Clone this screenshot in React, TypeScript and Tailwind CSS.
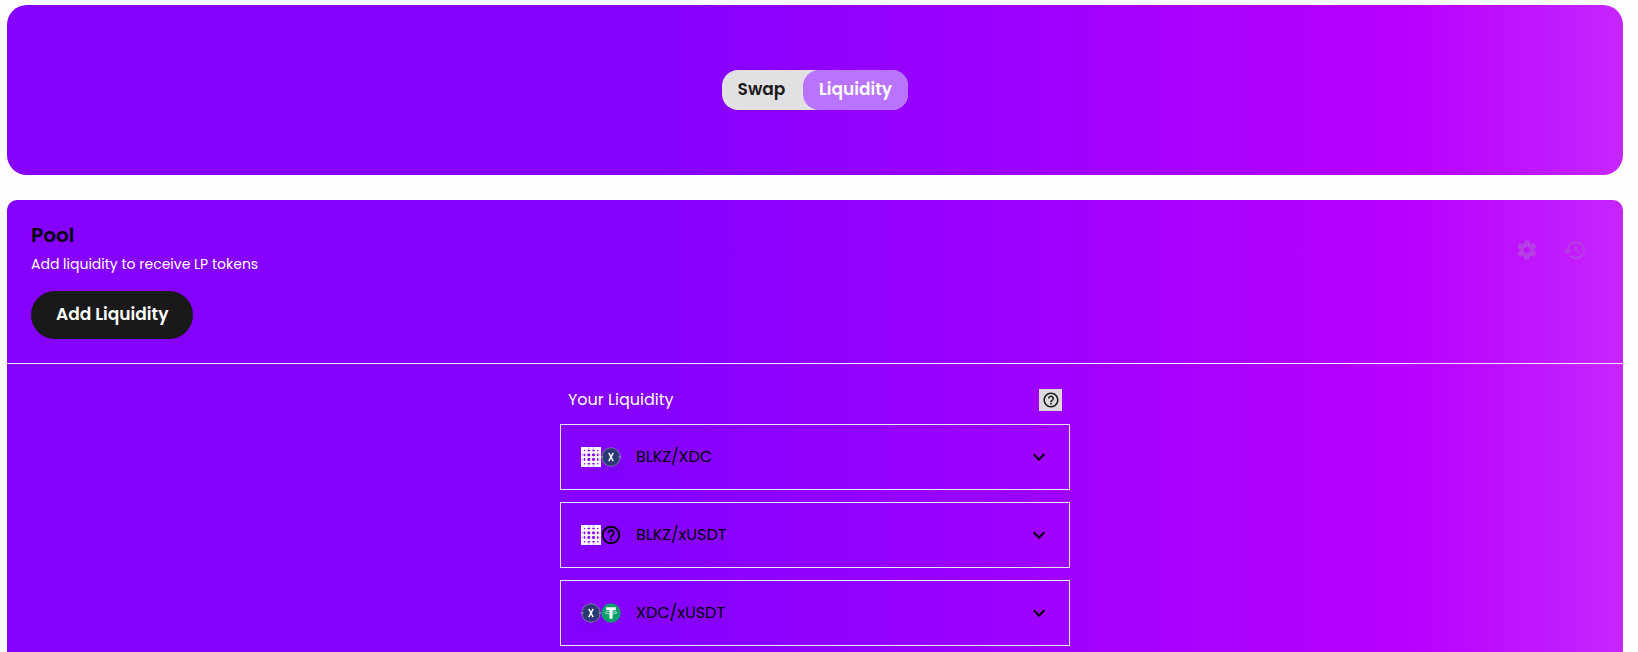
import type { ReactNode } from "react";

type Token = "BLKZ" | "XDC" | "xUSDT" | "unknown";

interface Pair {
  name: string;
  icons: [Token, Token];
}

const pairs: Pair[] = [
  { name: "BLKZ/XDC", icons: ["BLKZ", "XDC"] },
  { name: "BLKZ/xUSDT", icons: ["BLKZ", "unknown"] },
  { name: "XDC/xUSDT", icons: ["XDC", "xUSDT"] },
];

const GRADIENT =
  "bg-linear-to-r/srgb from-[#8500ff] from-40% via-[#b700ff] via-87% to-[#c626ff]";

function HelpIcon({ className }: { className?: string }) {
  return (
    <svg viewBox="0 0 24 24" fill="currentColor" className={className}>
      <path d="M11 18h2v-2h-2v2zm1-16C6.48 2 2 6.48 2 12s4.48 10 10 10 10-4.48 10-10S17.52 2 12 2zm0 18c-4.41 0-8-3.59-8-8s3.59-8 8-8 8 3.59 8 8-3.59 8-8 8zm0-14c-2.21 0-4 1.79-4 4h2c0-1.1.9-2 2-2s2 .9 2 2c0 2-3 1.75-3 5h2c0-2.25 3-2.5 3-5 0-2.21-1.79-4-4-4z" />
    </svg>
  );
}

function BlkzIcon() {
  const cells = [
    { at: 3.5, size: 1.6 },
    { at: 7.8, size: 2.8 },
    { at: 12.5, size: 2.8 },
    { at: 16.7, size: 1.6 },
  ];
  return (
    <svg viewBox="0 0 20 20" className="size-5">
      <rect width="20" height="20" fill="#fff" />
      {cells.map((row) =>
        cells.map((col) => (
          <rect
            key={`${col.at}-${row.at}`}
            x={col.at - col.size / 2}
            y={row.at - row.size / 2}
            width={col.size}
            height={row.size}
            rx="0.8"
            fill="#8a00ff"
          />
        ))
      )}
      <path
        d="M7.8 .6v1M12.5 .6v1M7.8 18.6v.8M12.5 18.6v.8M.6 7.8h1M.6 12.5h1M18.6 7.8h.8M18.6 12.5h.8"
        stroke="#8a00ff"
        strokeOpacity="0.6"
        strokeWidth="1.4"
      />
    </svg>
  );
}

function XdcIcon() {
  return (
    <svg
      viewBox="0 0 20 20"
      className="size-5 rounded-full shadow-[0_6px_10px_rgba(0,0,0,0.08)]"
    >
      <circle cx="10" cy="10" r="9.3" fill="#2b3977" stroke="#8f8aa6" strokeWidth="0.9" />
      <path d="M0.3 10h2M17.7 10h2" stroke="#b9b4cc" strokeWidth="1.2" />
      <path d="M7.8 5.9l4.4 8.2M12.2 5.9l-4.4 8.2" stroke="#fff" strokeWidth="1.4" />
    </svg>
  );
}

function TetherIcon() {
  return (
    <svg viewBox="0 0 20 20" className="size-5">
      <circle cx="10" cy="10" r="9.7" fill="#0c9f6c" />
      <path d="M5.2 4.3h9.6v3h-3.3v8.4H8.5V7.3H5.2z" fill="#fff" />
      <ellipse cx="10" cy="9.7" rx="5.8" ry="1.3" fill="none" stroke="#fff" strokeWidth="0.6" />
    </svg>
  );
}

function TokenIcon({ token }: { token: Token }) {
  if (token === "BLKZ") return <BlkzIcon />;
  if (token === "XDC") return <XdcIcon />;
  if (token === "xUSDT") return <TetherIcon />;
  return <HelpIcon className="size-5 scale-110" />;
}

function IconButton({ label, children }: { label: string; children: ReactNode }) {
  return (
    <button aria-label={label} className="flex size-12 items-center justify-center text-[#b53fe3]">
      <svg viewBox="0 0 24 24" fill="currentColor" className="size-6">
        {children}
      </svg>
    </button>
  );
}

function PairRow({ pair }: { pair: Pair }) {
  return (
    <li>
      <button className="flex h-[66px] w-full items-center border border-[#e7e3eb] pr-[18px] pl-5 text-left text-black">
        <TokenIcon token={pair.icons[0]} />
        <TokenIcon token={pair.icons[1]} />
        <span className="ml-[15px] flex-1 text-base">{pair.name}</span>
        <svg viewBox="0 0 24 24" fill="currentColor" className="size-6">
          <path d="M7.41 8.59 12 13.17l4.59-4.58L18 10l-6 6-6-6z" />
        </svg>
      </button>
    </li>
  );
}

export default function App() {
  return (
    <div className="h-screen overflow-hidden bg-[#fdfdfd] pt-[5px] pr-[15px] pl-[7px] font-['Poppins','Inter',sans-serif]">
      <header className={`flex h-[170px] items-center justify-center rounded-[20px] ${GRADIENT}`}>
        <nav className="flex h-10 rounded-2xl bg-[#e1e0e3] text-[17px] font-semibold">
          <button className="w-[81px] pr-0.5 text-[#191919]">Swap</button>
          <button className="w-[105px] rounded-2xl bg-[#b974ff] text-white">Liquidity</button>
        </nav>
      </header>

      <main className={`mt-[25px] min-h-screen rounded-t-[10px] ${GRADIENT}`}>
        <section className="flex items-center border-b border-[#f3e3ff] p-6">
          <div className="flex-1">
            <h1 className="text-xl leading-[22px] font-semibold text-black">Pool</h1>
            <p className="mt-2 text-sm leading-[21px] text-white">Add liquidity to receive LP tokens</p>
            <button className="mt-4 h-12 rounded-full bg-[#191919] px-[25px] text-[17px] font-semibold text-white">
              Add Liquidity
            </button>
          </div>
          <div className="mt-0.5 flex self-start">
            <IconButton label="Settings">
              <path d="M19.14 12.94c.04-.3.06-.61.06-.94 0-.32-.02-.64-.07-.94l2.03-1.58c.18-.14.23-.41.12-.61l-1.92-3.32c-.12-.22-.37-.29-.59-.22l-2.39.96c-.5-.38-1.03-.7-1.62-.94l-.36-2.54c-.04-.24-.24-.41-.48-.41h-3.84c-.24 0-.43.17-.47.41l-.36 2.54c-.59.24-1.13.57-1.62.94l-2.39-.96c-.22-.08-.47 0-.59.22L2.74 8.87c-.12.21-.08.47.12.61l2.03 1.58c-.05.3-.09.63-.09.94s.02.64.07.94l-2.03 1.58c-.18.14-.23.41-.12.61l1.92 3.32c.12.22.37.29.59.22l2.39-.96c.5.38 1.03.7 1.62.94l.36 2.54c.05.24.24.41.48.41h3.84c.24 0 .44-.17.47-.41l.36-2.54c.59-.24 1.13-.56 1.62-.94l2.39.96c.22.08.47 0 .59-.22l1.92-3.32c.12-.22.07-.47-.12-.61l-2.01-1.58zM12 15.3c-1.82 0-3.3-1.48-3.3-3.3s1.48-3.3 3.3-3.3 3.3 1.48 3.3 3.3-1.48 3.3-3.3 3.3z" />
            </IconButton>
            <IconButton label="History">
              <path d="M13 3c-4.97 0-9 4.03-9 9H1l3.89 3.89.07.14L9 12H6c0-3.87 3.13-7 7-7s7 3.13 7 7-3.13 7-7 7c-1.93 0-3.68-.79-4.94-2.06l-1.42 1.42C8.27 19.99 10.51 21 13 21c4.97 0 9-4.03 9-9s-4.03-9-9-9zm-1 5v5l4.28 2.54.72-1.21-3.5-2.08V8H12z" />
            </IconButton>
          </div>
        </section>

        <section className="mx-auto max-w-[510px] pt-6">
          <div className="mb-3 flex h-6 items-center justify-between px-2">
            <h2 className="text-base text-white">Your Liquidity</h2>
            <button
              aria-label="Help"
              className="flex h-[22px] w-[23px] items-center justify-center bg-[#dcd9df] text-[#191919]"
            >
              <HelpIcon className="size-[18px]" />
            </button>
          </div>
          <ul className="flex flex-col gap-3">
            {pairs.map((pair) => (
              <PairRow key={pair.name} pair={pair} />
            ))}
          </ul>
        </section>
      </main>
    </div>
  );
}
